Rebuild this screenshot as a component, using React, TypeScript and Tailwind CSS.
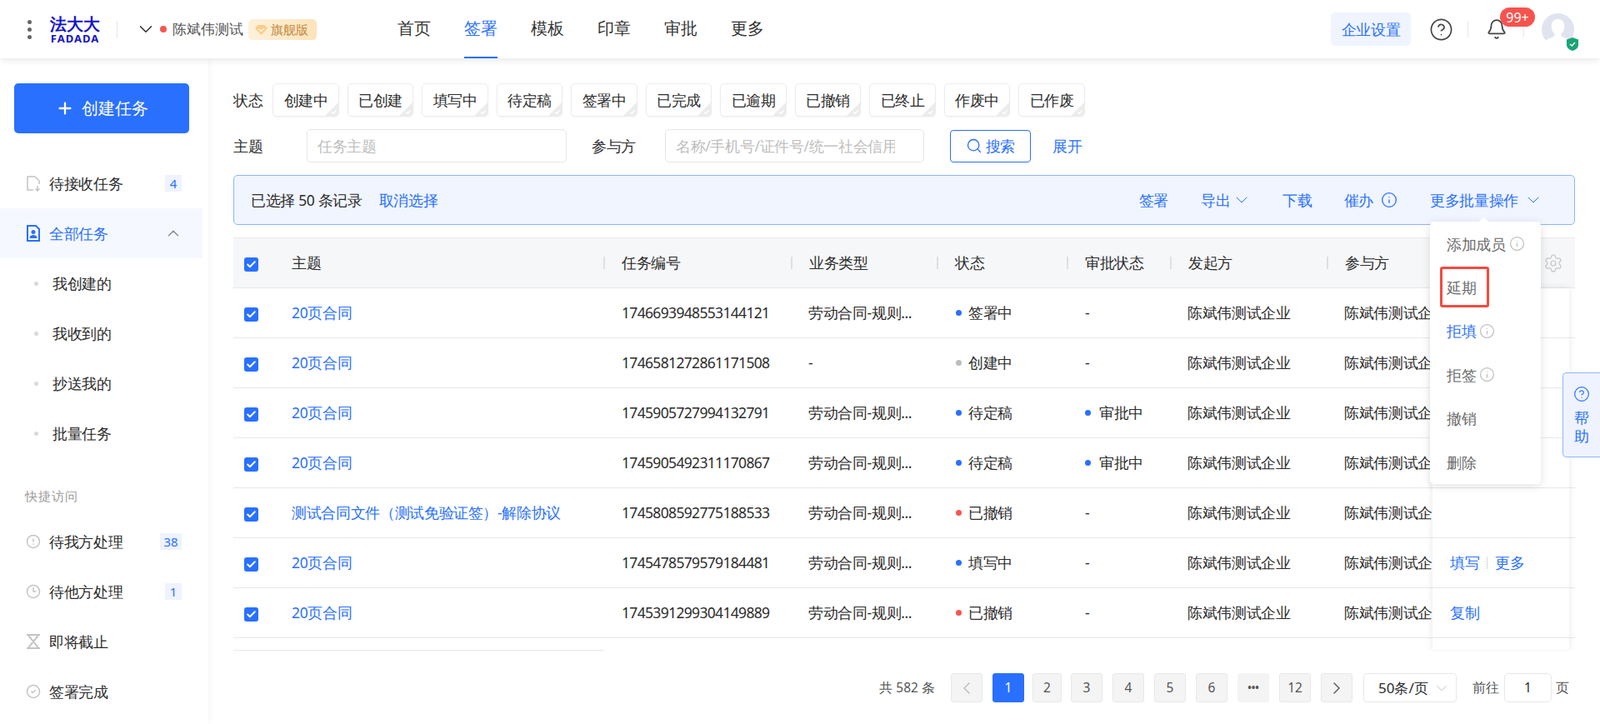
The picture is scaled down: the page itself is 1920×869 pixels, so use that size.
import { Bell, Check, ChevronDown, ChevronLeft, ChevronRight, ChevronUp, CircleAlert, CircleCheck, CircleHelp, Clock3, Info, Plus, Search, Settings } from "lucide-react"

const navItems = ["首页", "签署", "模板", "印章", "审批", "更多"]
const chips = ["创建中", "已创建", "填写中", "待定稿", "签署中", "已完成", "已逾期", "已撤销", "已终止", "作废中", "已作废"]
const pages = ["3", "4", "5", "6"]
const gridCols = "grid grid-cols-[70px_374px_225px_175px_156px_124px_188px_298px]"

const rows = [
	{ title: "20页合同", no: "1746693948553144121", type: "劳动合同-规则...", status: "签署中", dot: "bg-[#2970ff]", approval: "-" },
	{ title: "20页合同", no: "1746581272861171508", type: "-", status: "创建中", dot: "bg-[#bdbdbd]", approval: "-" },
	{ title: "20页合同", no: "1745905727994132791", type: "劳动合同-规则...", status: "待定稿", dot: "bg-[#2970ff]", approval: "审批中" },
	{ title: "20页合同", no: "1745905492311170867", type: "劳动合同-规则...", status: "待定稿", dot: "bg-[#2970ff]", approval: "审批中" },
	{ title: "测试合同文件（测试免验证签）-解除协议", no: "1745808592775188533", type: "劳动合同-规则...", status: "已撤销", dot: "bg-[#f5564e]", approval: "-" },
	{ title: "20页合同", no: "1745478579579184481", type: "劳动合同-规则...", status: "填写中", dot: "bg-[#2970ff]", approval: "-" },
	{ title: "20页合同", no: "1745391299304149889", type: "劳动合同-规则...", status: "已撤销", dot: "bg-[#f5564e]", approval: "-" },
]

function CheckBox() {
	return (
		<span className="flex h-[17px] w-[17px] items-center justify-center rounded-[3px] bg-[#2970ff]">
			<Check size={13} strokeWidth={3.5} className="text-white" />
		</span>
	)
}

function Chip({ label }: { label: string }) {
	return (
		<div className="relative flex h-10 w-[79.5px] items-center justify-center rounded-[5px] border border-[#ececec] shadow-[0_1px_2px_rgba(0,0,0,0.04)]">
			{label}
			<svg viewBox="0 0 16 16" className="absolute bottom-0 right-0 h-4 w-4">
				<path d="M16 0V12a4 4 0 0 1-4 4H0Z" fill="#ececec" />
				<path d="M8 11.5l2 2 3.5-4" fill="none" stroke="#fff" strokeWidth="1.3" />
			</svg>
		</div>
	)
}

function Badge({ children, w }: { children: React.ReactNode; w: string }) {
	return <span className={`ml-auto flex h-5 items-center justify-center bg-[#eef3ff] text-[15px] tracking-normal text-[#2970ff] ${w}`}>{children}</span>
}

function SideItem({ icon, label, badge }: { icon: React.ReactNode; label: string; badge?: React.ReactNode }) {
	return (
		<div className="mr-[7px] flex h-[60px] items-center gap-[10px] pl-[31px] pr-[25px]">
			<span className="flex w-[18px] justify-center text-[#c4c4c4]">{icon}</span>
			{label}
			{badge}
		</div>
	)
}

function SubItem({ label }: { label: string }) {
	return (
		<div className="flex h-[60px] items-center pl-[41px]">
			<span className="mr-[17px] h-[5px] w-[5px] rounded-full bg-[#d9d9d9]" />
			{label}
		</div>
	)
}

function PageButton({ children, active }: { children: React.ReactNode; active?: boolean }) {
	return (
		<div className={`flex h-[35px] w-[38px] items-center justify-center rounded-[3px] border ${active ? "border-[#2970ff] bg-[#2970ff] text-white" : "border-[#e8e8e8] bg-[#f4f4f4] text-[#555]"}`}>
			{children}
		</div>
	)
}

function HeadCell({ label }: { label: string }) {
	return (
		<div className="flex items-center">
			<span className="mr-[20px] h-[15px] w-[2px] bg-[#e0e0e0]" />
			{label}
		</div>
	)
}

function MenuItem({ label, info, active }: { label: string; info?: boolean; active?: boolean }) {
	return (
		<div className={`flex h-[52.4px] items-center gap-[4px] pl-5 ${active ? "text-[#2970ff]" : "text-[#6b6b6b]"}`}>
			{label}
			{info && <Info size={19} strokeWidth={1.6} className="text-[#bfbfbf]" />}
		</div>
	)
}

export default function App() {
	return (
		<div className="flex h-screen w-full flex-col overflow-hidden bg-white font-[Roboto,'Noto_Sans_CJK_SC',sans-serif] text-[17.5px] tracking-[-0.35px] text-[#2c2c2c]">
			<header className="relative z-20 flex h-[70px] shrink-0 items-center bg-white tracking-normal shadow-[0_2px_8px_rgba(0,0,0,0.1)]">
				<div className="ml-[33px] flex w-[5px] flex-col gap-[4px]">
					<span className="h-[5px] w-[5px] rounded-full bg-[#666]" />
					<span className="h-[5px] w-[5px] rounded-full bg-[#666]" />
					<span className="h-[5px] w-[5px] rounded-full bg-[#666]" />
				</div>
				<div className="ml-[22px] flex w-[60px] flex-col items-center text-[#1414c8]">
					<span className="text-[20px] font-black leading-[22px]">法大大</span>
					<span className="font-['Liberation_Sans',sans-serif] text-[13px] font-bold leading-[13px] tracking-[1px]">FADADA</span>
				</div>
				<span className="ml-5 h-5 w-px bg-[#e4e4e4]" />
				<ChevronDown size={26} strokeWidth={1.4} className="ml-[21px] text-[#333]" />
				<span className="ml-[4px] h-2 w-2 rounded-full bg-[#f5564e]" />
				<span className="ml-[7px] text-[17px] text-[#555]">陈斌伟测试</span>
				<span className="ml-[6px] flex h-[25px] w-[82px] items-center gap-[4px] rounded-[5px] bg-gradient-to-r from-[#fdf1dc] to-[#fbe3b9] pl-[8px] text-[15px] font-medium text-[#c48a42]">
					<svg viewBox="0 0 16 14" className="h-[13px] w-[15px]">
						<path d="M4 1h8l4 4.5L8 14 0 5.5Z" fill="#f9cd86" />
						<path d="M4.5 6L8 9l3.5-3" fill="none" stroke="#fff" strokeWidth="1.3" />
					</svg>
					旗舰版
				</span>
				<nav className="ml-[97px] flex h-full gap-10 text-[20px]">
					{navItems.map((item) => (
						<div key={item} className={`flex h-full items-center border-b-[2px] ${item === "签署" ? "border-[#2970ff] text-[#2970ff]" : "border-transparent text-[#333]"}`}>
							{item}
						</div>
					))}
				</nav>
				<div className="ml-auto flex h-[40px] w-[96px] items-center justify-center rounded-[5px] bg-[#eff4ff] tracking-[-0.35px] text-[#2970ff]">企业设置</div>
				<CircleHelp size={29} strokeWidth={1.4} className="ml-[22px] text-[#444]" />
				<span className="ml-[17px] h-5 w-px bg-[#e8e8e8]" />
				<div className="relative ml-[21px] flex h-[26px] w-[26px] items-center justify-center">
					<Bell size={26} strokeWidth={1.6} className="text-[#444]" />
					<span className="absolute left-[17px] top-[-13px] flex h-[23px] w-[42px] items-center justify-center rounded-full bg-[#f7534e] text-[16px] text-white">99+</span>
				</div>
				<span className="ml-[19px] h-5 w-px bg-[#e8e8e8]" />
				<div className="relative ml-[21px] mr-[31px] h-[39px] w-[39px] overflow-visible">
					<svg viewBox="0 0 40 40" className="h-[39px] w-[39px]">
						<circle cx="20" cy="20" r="20" fill="#e0e4ef" />
						<path d="M20 7c5 0 8 4 8 9 0 4-2 8-4 9v3c3 2 9 3 11 6a20 20 0 0 1-30 0c2-3 8-4 11-6v-3c-2-1-4-5-4-9 0-5 3-9 8-9Z" fill="#fff" />
					</svg>
					<svg viewBox="0 0 14 16" className="absolute bottom-[-6px] right-[-5px] h-[16px] w-[14px]">
						<path d="M7 0l7 2.5V9c0 3.5-3.5 6-7 7-3.5-1-7-3.5-7-7V2.5Z" fill="#17a673" />
						<path d="M4 8l2.3 2L10 6" fill="none" stroke="#fff" strokeWidth="1.5" />
					</svg>
				</div>
			</header>

			<div className="flex min-h-0 flex-1">
				<aside className="z-10 w-[250px] shrink-0 bg-white pt-[30px] shadow-[2px_0_6px_rgba(0,0,0,0.04)]">
					<div className="mx-[17px] flex h-[60px] w-[210px] items-center justify-center gap-[9px] rounded-[5px] bg-[#2970ff] text-[20px] tracking-normal text-white">
						<Plus size={22} strokeWidth={2.5} />
						创建任务
					</div>
					<div className="mt-[30px]">
						<SideItem
							label="待接收任务"
							icon={
								<svg viewBox="0 0 18 20" className="h-5 w-[18px]" fill="none" stroke="#c4c4c4" strokeWidth="1.5">
									<path d="M9 18H2V2h9l5 5v4" />
									<path d="M14 13v6M11.5 16.5L14 19l2.5-2.5" />
								</svg>
							}
							badge={<Badge w="w-5">4</Badge>}
						/>
						<div className="mr-[7px] flex h-[60px] items-center gap-[10px] bg-[#f5f8ff] pl-[31px] pr-[24px] text-[#2970ff]">
							<svg viewBox="0 0 18 20" className="h-5 w-[18px]">
								<path d="M2 1h10l4 4v14H2Z" fill="none" stroke="#2970ff" strokeWidth="2" />
								<circle cx="9" cy="8.5" r="2.5" fill="#2970ff" />
								<path d="M4.5 16c0-3 2-4 4.5-4s4.5 1 4.5 4Z" fill="#2970ff" />
							</svg>
							全部任务
							<ChevronUp size={22} strokeWidth={1.5} className="ml-auto text-[#888]" />
						</div>
						<SubItem label="我创建的" />
						<SubItem label="我收到的" />
						<SubItem label="抄送我的" />
						<SubItem label="批量任务" />
					</div>
					<div className="ml-[30px] mt-[30px] flex h-[30px] items-center text-[15px] tracking-[1px] text-[#9a9a9a]">快捷访问</div>
					<div className="mt-[10px]">
						<SideItem label="待我方处理" icon={<CircleAlert size={18} />} badge={<Badge w="w-[26px]">38</Badge>} />
						<SideItem label="待他方处理" icon={<Clock3 size={18} />} badge={<Badge w="w-5">1</Badge>} />
						<SideItem
							label="即将截止"
							icon={
								<svg viewBox="0 0 16 18" className="h-[18px] w-4" fill="none" stroke="#c4c4c4" strokeWidth="2">
									<path d="M0 1h16M0 17h16M3 1v2l10 12v2M13 1v2L3 15v2" />
								</svg>
							}
						/>
						<SideItem label="签署完成" icon={<CircleCheck size={18} />} />
					</div>
				</aside>

				<main className="min-w-0 flex-1 pl-[30px] pr-[30px] pt-[30px]">
					<div className="flex items-center gap-[10px]">
						<span className="mr-[2px]">状态</span>
						{chips.map((chip) => (
							<Chip key={chip} label={chip} />
						))}
					</div>

					<div className="mt-[15px] flex h-10 items-center">
						<span className="w-[88px]">主题</span>
						<div className="flex h-10 w-[312px] items-center rounded-[5px] border border-[#e6e6e6] pl-3">
							<input placeholder="任务主题" className="w-full bg-transparent outline-none placeholder:text-[#bdbdbd]" />
						</div>
						<span className="ml-[30px] w-[88px]">参与方</span>
						<div className="flex h-10 w-[311px] items-center rounded-[5px] border border-[#e6e6e6] pl-3">
							<input placeholder="名称/手机号/证件号/统一社会信用代码" className="w-[263px] bg-transparent outline-none placeholder:text-[#bdbdbd]" />
						</div>
						<div className="ml-[31px] flex h-[39px] w-[97px] items-center justify-center gap-[4px] rounded-[4px] border border-[#2970ff] text-[#2970ff]">
							<Search size={20} strokeWidth={1.6} />
							搜索
						</div>
						<span className="ml-[26px] text-[#2970ff]">展开</span>
					</div>

					<div className="relative z-10 mt-[15px] flex h-[60px] items-center rounded-[5px] border border-[#8fb3ff] bg-[#f0f5ff] pl-[20px]">
						<span>已选择 50 条记录</span>
						<span className="ml-[20px] text-[#2970ff]">取消选择</span>
						<div className="ml-auto flex items-center text-[#2970ff]">
							<span>签署</span>
							<span className="ml-[39px] flex items-center gap-[2px]">
								导出
								<ChevronDown size={24} strokeWidth={1} />
							</span>
							<span className="ml-[37px]">下载</span>
							<span className="ml-[38px] flex items-center gap-[9px]">
								催办
								<Info size={20} strokeWidth={1.6} />
							</span>
							<span className="ml-[39px] flex items-center gap-[6px]">
								更多批量操作
								<ChevronDown size={24} strokeWidth={1} />
							</span>
							<span className="w-[37px]" />
						</div>
						<div className="absolute right-[40px] top-[55px] w-[133px] rounded-[5px] bg-white py-[0.5px] shadow-[0_2px_12px_rgba(0,0,0,0.12)]">
							<span className="absolute left-[60px] top-[-4px] h-[9px] w-[9px] rotate-45 bg-white" />
							<MenuItem label="添加成员" info />
							<MenuItem label="延期" />
							<MenuItem label="拒填" info active />
							<MenuItem label="拒签" info />
							<MenuItem label="撤销" />
							<MenuItem label="删除" />
							<span className="absolute left-[12px] top-[54px] h-[49px] w-[59px] rounded-[3px] border-[3px] border-[#f44a3e]" />
						</div>
					</div>

					<div className="relative mt-[15px] overflow-hidden">
						<div className={`${gridCols} h-[61px] items-center border-y border-[#e8e8e8] bg-[#f6f7f9]`}>
							<div className="mt-[3px] pl-[13px]">
								<CheckBox />
							</div>
							<div>主题</div>
							<HeadCell label="任务编号" />
							<HeadCell label="业务类型" />
							<HeadCell label="状态" />
							<HeadCell label="审批状态" />
							<HeadCell label="发起方" />
							<HeadCell label="参与方" />
						</div>
						{rows.map((row) => (
							<div key={row.no} className={`${gridCols} h-[60px] items-center border-b border-[#e8e8e8]`}>
								<div className="mt-[3px] pl-[13px]">
									<CheckBox />
								</div>
								<div className="text-[#2970ff]">{row.title}</div>
								<div className="pl-[22px] tracking-[-0.67px]">{row.no}</div>
								<div className="pl-[21px]">{row.type}</div>
								<div className="flex items-center pl-[23px]">
									<span className={`mr-[8px] h-[7px] w-[7px] rounded-full ${row.dot}`} />
									{row.status}
								</div>
								<div className="flex items-center pl-[22px]">
									{row.approval !== "-" && <span className="mr-[10px] h-[7px] w-[7px] rounded-full bg-[#2970ff]" />}
									{row.approval}
								</div>
								<div className="pl-[21px]">陈斌伟测试企业</div>
								<div className="pl-[21px]">陈斌伟测试企业</div>
							</div>
						))}
						<div className="mt-[14px] h-px w-[445px] bg-[#e8e8e8]" />
						<Settings size={24} strokeWidth={1.2} className="absolute right-[14px] top-[19px] text-[#c4c4c4]" />
						<div className="absolute left-[1439px] top-[61px] h-[434px] w-[164px] bg-white shadow-[0_0_8px_rgba(0,0,0,0.1)]">
							{[0, 1, 2, 3, 4].map((i) => (
								<div key={i} className="h-[60px] border-b border-[#e8e8e8]" />
							))}
							<div className="flex h-[60px] items-center gap-[9px] border-b border-[#e8e8e8] pl-[21px] text-[#2970ff]">
								填写
								<span className="h-[15px] w-px bg-[#d9d9d9]" />
								更多
							</div>
							<div className="flex h-[60px] items-center border-b border-[#e8e8e8] pl-[21px] text-[#2970ff]">复制</div>
						</div>
					</div>

					<div className="mt-[27px] flex items-center justify-end pr-[7px] text-[15.5px] tracking-normal">
						<span className="mr-[19px] text-[#555]">共 582 条</span>
						<PageButton>
							<ChevronLeft size={24} strokeWidth={1.4} className="text-[#bbb]" />
						</PageButton>
						<div className="ml-[12px] flex gap-[12px]">
							<PageButton active>1</PageButton>
							<div className="-ml-[2px] -mr-px flex h-[35px] w-[35px] items-center justify-center rounded-[3px] border border-[#e8e8e8] bg-[#f4f4f4] text-[#555]">2</div>
							{pages.map((page) => (
								<PageButton key={page}>{page}</PageButton>
							))}
							<div className="flex h-[35px] w-[38px] items-center justify-center rounded-[3px] bg-[#f4f4f4] text-[12px] font-bold text-[#555]">•••</div>
							<PageButton>12</PageButton>
							<PageButton>
								<ChevronRight size={24} strokeWidth={1.4} className="text-[#555]" />
							</PageButton>
						</div>
						<div className="ml-[13px] flex h-[35px] w-[112px] items-center rounded-[4px] border border-[#e8e8e8] pl-[17px] text-[17px]">
							50条/页
							<ChevronDown size={22} strokeWidth={1} className="ml-auto mr-[6px] text-[#bbb]" />
						</div>
						<span className="ml-[19px] text-[#555]">前往</span>
						<div className="ml-[6px] flex h-[35px] w-[57px] items-center justify-center rounded-[5px] border border-[#e8e8e8]">1</div>
						<span className="ml-[5px] text-[#555]">页</span>
					</div>
				</main>
			</div>

			<div className="fixed right-0 top-[447px] z-30 flex h-[102px] w-[45px] flex-col items-center rounded-l-[5px] border border-r-0 border-[#8fb3ff] bg-[#eef3ff] pt-[15px] text-[#2970ff]">
				<CircleHelp size={20} strokeWidth={1.4} />
				<span className="mt-[7px] leading-[22px]">帮</span>
				<span className="leading-[22px]">助</span>
			</div>
		</div>
	)
}
